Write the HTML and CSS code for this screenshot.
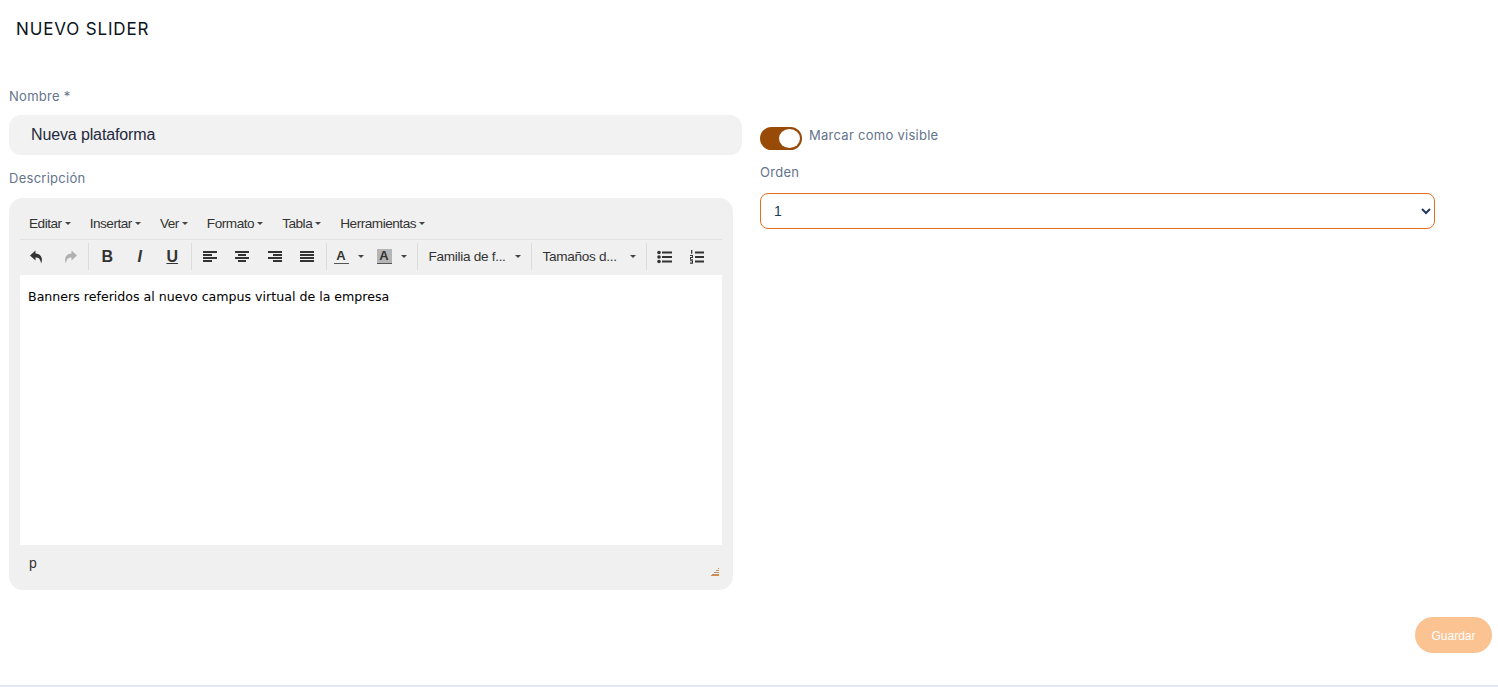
FILE: index.html
```html
<!DOCTYPE html>
<html lang="es">
<head>
<meta charset="utf-8">
<title>Nuevo slider</title>
<link rel="stylesheet" href="styles.css">
</head>
<body>
<div class="page">
  <h1 class="title">NUEVO SLIDER</h1>
  <form class="form">
    <div class="col-left">
      <label class="label label-name">Nombre *</label>
      <div class="text-input">Nueva plataforma</div>
      <label class="label label-desc">Descripción</label>
      <div class="editor">
        <div class="menubar">
          <span class="menu">Editar<i class="caret"></i></span>
          <span class="menu">Insertar<i class="caret"></i></span>
          <span class="menu">Ver<i class="caret"></i></span>
          <span class="menu">Formato<i class="caret"></i></span>
          <span class="menu">Tabla<i class="caret"></i></span>
          <span class="menu">Herramientas<i class="caret"></i></span>
        </div>
        <div class="toolbar">
          <div class="group first">
            <span class="btn"><svg width="16" height="16" viewBox="0 0 16 16"><path class="ico" d="M6.5 1.5 1 6.5l5.5 5V8.6c3 0 4.8 1 5.6 5.9C14.400 9 11.800 4.700 6.500 4.500z"/></svg></span>
            <span class="btn"><svg width="16" height="16" viewBox="0 0 16 16"><path class="ico-off" d="M9.500 1.500 15 6.500l-5.500 5V8.600c-3 0-4.800 1-5.600 5.900C1.600 9 4.200 4.700 9.500 4.500z"/></svg></span>
          </div>
          <div class="group">
            <span class="btn glyph bold">B</span>
            <span class="btn glyph italic">I</span>
            <span class="btn glyph under">U</span>
          </div>
          <div class="group">
            <span class="btn"><svg width="16" height="14" viewBox="0 0 16 14"><path class="ico" d="M1 1h14v2H1zM1 4h9v2H1zM1 7h14v2H1zM1 10h9v2H1z"/></svg></span>
            <span class="btn"><svg width="16" height="14" viewBox="0 0 16 14"><path class="ico" d="M1 1h14v2H1zM4 4h8v2H4zM1 7h14v2H1zM4 10h8v2H4z"/></svg></span>
            <span class="btn"><svg width="16" height="14" viewBox="0 0 16 14"><path class="ico" d="M1 1h14v2H1zM6 4h9v2H6zM1 7h14v2H1zM6 10h9v2H6z"/></svg></span>
            <span class="btn"><svg width="16" height="14" viewBox="0 0 16 14"><path class="ico" d="M1 1h14v2H1zM1 4h14v2H1zM1 7h14v2H1zM1 10h14v2H1z"/></svg></span>
          </div>
          <div class="group">
            <span class="btn color"><span class="swatch">A</span><i class="caret wide"></i></span>
            <span class="btn color"><span class="swatch filled">A</span><i class="caret wide"></i></span>
          </div>
          <div class="group">
            <span class="btn select family">Familia de f...<i class="caret wide"></i></span>
          </div>
          <div class="group">
            <span class="btn select size">Tamaños d...<i class="caret wide"></i></span>
          </div>
          <div class="group">
            <span class="btn"><svg width="16" height="14" viewBox="0 0 16 14"><path class="ico" d="M5 1.500h10v2H5zM5 6h10v2H5zM5 10.500h10v2H5z"/><circle class="ico" cx="2" cy="2.500" r="1.800"/><circle class="ico" cx="2" cy="7" r="1.800"/><circle class="ico" cx="2" cy="11.500" r="1.800"/></svg></span>
            <span class="btn"><svg width="16" height="14" viewBox="0 0 16 14"><path class="ico" d="M6 1.500h9v2H6zM6 6h9v2H6zM6 10.500h9v2H6zM2 0h1.300v3.800H2zM1 5h3v1H1zM3 6h1v1H3zM1 7h3v1H1zM1 8h1v1H1zM1 9h3v.8H1zM1 10.300h3v.8H1zM3 11.100h1v2H3zM1 11.800h3v.7H1zM1 13h3v.8H1z"/></svg></span>
          </div>
        </div>
        <div class="content">Banners referidos al nuevo campus virtual de la empresa</div>
        <div class="statusbar">
          <span class="path">p</span>
          <svg class="grip" width="10" height="10" viewBox="0 0 10 10"><path fill="#e08a3a" d="M8 1h1v1H8zM6 3h3v1H6zM4 5h5v1H4zM2 7h7v1H2zM1 8h8v1H1z"/><path fill="#7f97b8" d="M7 3h1v1H7zM7 5h1v1H7zM5 5h1v1H5zM7 7h1v1H7zM5 7h1v1H5zM3 7h1v1H3z"/></svg>
        </div>
      </div>
    </div>
    <div class="col-right">
      <div class="switch-row">
        <span class="switch"><span class="knob"></span></span>
        <span class="switch-label">Marcar como visible</span>
      </div>
      <label class="label label-order">Orden</label>
      <select class="select-input"><option>1</option></select>
    </div>
  </form>
  <div class="actions"><button type="button" class="save">Guardar</button></div>
</div>
</body>
</html>
```
FILE: styles.css
```css
* { box-sizing: border-box; }
html, body { margin: 0; padding: 0; background: #fff; }
body { font-family: "Liberation Sans", Arial, sans-serif; overflow: hidden; }

.page {
  height: 687px;
  border-bottom: 2px solid #e3e6f3;
  padding: 0 6px 0 9px;
}
.title {
  margin: 0;
  padding: 19px 0 0 7px;
  height: 86px;
  font: 400 17px/20px Inter, sans-serif;
  letter-spacing: 0.85px;
  color: #0b1320;
}
.form { display: grid; grid-template-columns: 733px 675px; column-gap: 18px; height: 504px; }
.label { display: block; font: 400 13px/20px Inter, sans-serif; letter-spacing: 0.27px; color: #64748b; }
.label-name { height: 20px; }
.text-input {
  margin-top: 9px;
  height: 40px;
  border-radius: 12px;
  background: #f2f2f2;
  padding-left: 22px;
  font-size: 16px;
  letter-spacing: -0.13px;
  line-height: 39px;
  color: #1f2a3c;
}
.label-desc { margin-top: 13px; height: 20px; }
.editor {
  margin-top: 10px;
  width: 724px;
  height: 392px;
  border-radius: 14px;
  background: #f0f0f0;
  padding: 11px 11px 0;
  display: flex;
  flex-direction: column;
}
.menubar {
  height: 31px;
  border-bottom: 1px solid #e2e2e2;
  display: flex;
  gap: 19px;
  padding-left: 9px;
  font-size: 13.600px;
  line-height: 29px;
  color: #333;
  letter-spacing: -0.48px;
}
.menu { display: inline-flex; align-items: center; height: 29px; }
.caret {
  display: inline-block;
  margin-left: 3px;
  border-top: 3px solid #444;
  border-left: 3px solid transparent;
  border-right: 3px solid transparent;
}
.toolbar { height: 35px; display: flex; padding: 3px 0 0 1px; }
.group { display: flex; height: 27px; padding: 0 0 0 2px; border-left: 1px solid #dcdcdc; margin-left: 2px; }
.group.first { border-left: 0; margin-left: 0; padding: 0; }
.btn {
  width: 32.500px;
  height: 27px;
  display: flex;
  align-items: center;
  justify-content: center;
}
.ico { fill: #333; }
.ico-off { fill: #b0b0b0; }
.glyph { font-size: 16px; color: #333; }
.bold { font-weight: 700; }
.italic { font-style: italic; font-weight: 700; }
.under { text-decoration: underline; font-weight: 700; }
.btn.color { width: 43px; justify-content: flex-start; padding-left: 5px; }
.swatch {
  width: 15px;
  height: 15px;
  text-align: center;
  font-size: 13px;
  font-weight: 700;
  line-height: 13px;
  color: #333;
  border-bottom: 1px solid #555;
}
.swatch.filled { background: #b5b5b5; }
.btn.select {
  justify-content: flex-start;
  font-size: 13.600px;
  color: #333;
  letter-spacing: -0.3px;
  padding-left: 9px;
}
.btn.select .caret { margin-left: auto; margin-right: 8px; }
.family { width: 109px; }
.size { width: 110px; }
.caret.wide { margin-left: 9px; }
.content {
  width: 702px;
  height: 270px;
  background: #fff;
  padding: 13px 8px 0;
  font: 400 12.600px/17px "DejaVu Sans", Verdana, sans-serif;
  color: #000;
}
.statusbar { flex: 1; position: relative; padding: 9px 0 0 9px; font-size: 14px; line-height: 18px; color: #333; }
.grip { position: absolute; right: 2px; bottom: 13px; }
.col-right { padding-top: 41px; }
.switch-row { display: flex; height: 23px; }
.switch {
  width: 42px;
  height: 23px;
  border-radius: 12px;
  background: #974b06;
  padding: 2px;
  display: flex;
  justify-content: flex-end;
}
.knob { width: 21px; height: 19px; border-radius: 50%; background: #fff; }
.switch-label { margin-left: 7px; font: 400 13px/17px Inter, sans-serif; letter-spacing: 0.27px; color: #64748b; }
.label-order { margin-top: 12px; height: 20px; }
.select-input {
  margin-top: 11px;
  width: 100%;
  height: 36px;
  border: 1px solid #e66c1e;
  border-radius: 8px;
  background: #fff;
  padding-left: 9px;
  font: 400 14px "Liberation Sans", Arial, sans-serif;
  color: #223a5e;
}
.actions { display: flex; justify-content: flex-end; padding-top: 27px; }
.save {
  width: 77px;
  height: 36px;
  border: 0;
  border-radius: 18px;
  background: #fcc392;
  color: #fff;
  padding: 1px 0 0;
  font: 400 12px "Liberation Sans", Arial, sans-serif;
}
```
